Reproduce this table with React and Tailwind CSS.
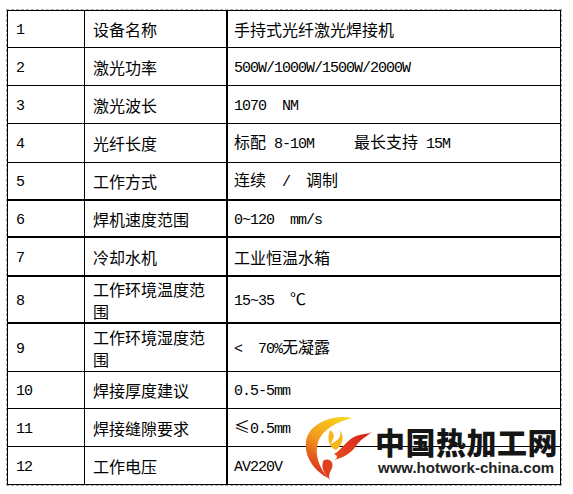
const rows = [
  { no: "1", name: "设备名称", value: "手持式光纤激光焊接机", h: "h-[37px]", b: "border-b" },
  { no: "2", name: "激光功率", value: "500W/1000W/1500W/2000W", h: "h-[38px]", b: "border-b" },
  { no: "3", name: "激光波长", value: "1070  NM", h: "h-[38px]", b: "border-b" },
  { no: "4", name: "光纤长度", value: "标配 8-10M     最长支持 15M", h: "h-[39px]", b: "border-b" },
  { no: "5", name: "工作方式", value: "连续  /  调制", h: "h-[38px]", b: "border-b-2" },
  { no: "6", name: "焊机速度范围", value: "0~120  mm/s", h: "h-[37px]", b: "border-b-2" },
  { no: "7", name: "冷却水机", value: "工业恒温水箱", h: "h-[39px]", b: "border-b-2" },
  { no: "8", name: "工作环境温度范围", value: "15~35  ℃", h: "h-[47px]", b: "border-b-2" },
  { no: "9", name: "工作环境湿度范围", value: "<  70%无凝露", h: "h-[48px]", b: "border-b" },
  { no: "10", name: "焊接厚度建议", value: "0.5-5mm", h: "h-[37px]", b: "border-b" },
  { no: "11", name: "焊接缝隙要求", value: "≤0.5mm", h: "h-[38px]", b: "border-b" },
  { no: "12", name: "工作电压", value: "AV220V", h: "h-[37px]", b: "" },
];

// ascii bits in a narrow mono face, the rest in the CJK face (one inline run so baselines line up)
function Txt({ text }) {
  const parts = text.match(/[\x20-\x7e]+|[^\x20-\x7e]+/g) || [];
  return (
    <span>
      {parts.map((p, i) =>
        /^[\x20-\x7e]+$/.test(p) ? (
          <span key={i} className="font-['Liberation_Mono'] text-[15px] tracking-[-1px] whitespace-pre">
            {p}
          </span>
        ) : (
          <span key={i}>{p}</span>
        )
      )}
    </span>
  );
}

function Logo() {
  return (
    <div className="absolute left-[300px] top-[410px] flex items-start pointer-events-none">
      <svg width="74" height="72" viewBox="0 0 74 72">
        <defs>
          <linearGradient id="arc" x1="0.7" y1="0" x2="0.3" y2="1">
            <stop offset="0" stopColor="#f7d21b" />
            <stop offset="0.45" stopColor="#f29a1d" />
            <stop offset="1" stopColor="#d8261c" />
          </linearGradient>
          <linearGradient id="tongue" x1="0" y1="1" x2="1" y2="0">
            <stop offset="0" stopColor="#e8501c" />
            <stop offset="1" stopColor="#d91f1d" />
          </linearGradient>
        </defs>
        {/* big crescent */}
        <path
          d="M52 8 C32 4 8 14 6 32 C4 48 16 62 28 68 C20 58 14 46 18 32 C22 20 36 12 52 8 Z"
          fill="url(#arc)"
        />
        {/* small yellow flame */}
        <path
          d="M30 20 C36 24 34 30 30 34 C36 32 42 28 40 20 C44 26 44 34 36 40 C30 38 26 30 30 20 Z"
          fill="#f5b81c"
        />
        {/* red tongue to the right */}
        <path
          d="M34 44 C42 40 46 30 56 26 C62 24 68 24 72 22 C64 28 60 30 56 36 C52 42 44 48 34 50 C38 48 38 46 34 44 Z"
          fill="url(#tongue)"
        />
        <path
          d="M24 50 C30 48 34 52 32 58 C30 62 28 66 30 70 C24 64 20 56 24 50 Z"
          fill="#e0401c"
        />
      </svg>
      <div className="flex flex-col ml-[1px]">
        <div className="mt-[16px] font-['Noto_Sans_CJK_SC',sans-serif] font-black text-[30px] leading-[30px] tracking-[0.5px] text-[#151515] whitespace-nowrap">
          中国热加工网
        </div>
        <div className="mt-[4px] ml-[3px] font-['Liberation_Sans',sans-serif] font-bold text-[15px] leading-[16px] text-[#222] whitespace-nowrap">
          www.hotwork-china.com
        </div>
      </div>
    </div>
  );
}

export default function App() {
  return (
    <div className="relative w-[573px] h-[494px] bg-white overflow-hidden font-['Noto_Sans_CJK_SC',sans-serif] text-[16px] text-black">
      <div className="ml-[6px] pt-[9px]">
        <div className="w-[556px] border border-dashed border-[#a8a8a8]">
          <div className="border border-black">
            {rows.map((r) => (
              <div key={r.no} className={`flex ${r.h} ${r.b} border-black`}>
                <div className="w-[77px] shrink-0 border-r border-black flex items-center pl-[8px] leading-[22px]">
                  <Txt text={r.no} />
                </div>
                <div className="w-[143px] shrink-0 border-r-2 border-black flex items-center pl-[8px] pr-[8px] leading-[22px]">
                  <span>{r.name}</span>
                </div>
                <div className="flex-1 flex items-center pl-[6px] leading-[22px] whitespace-pre">
                  <Txt text={r.value} />
                </div>
              </div>
            ))}
          </div>
        </div>
      </div>
      <Logo />
    </div>
  );
}
